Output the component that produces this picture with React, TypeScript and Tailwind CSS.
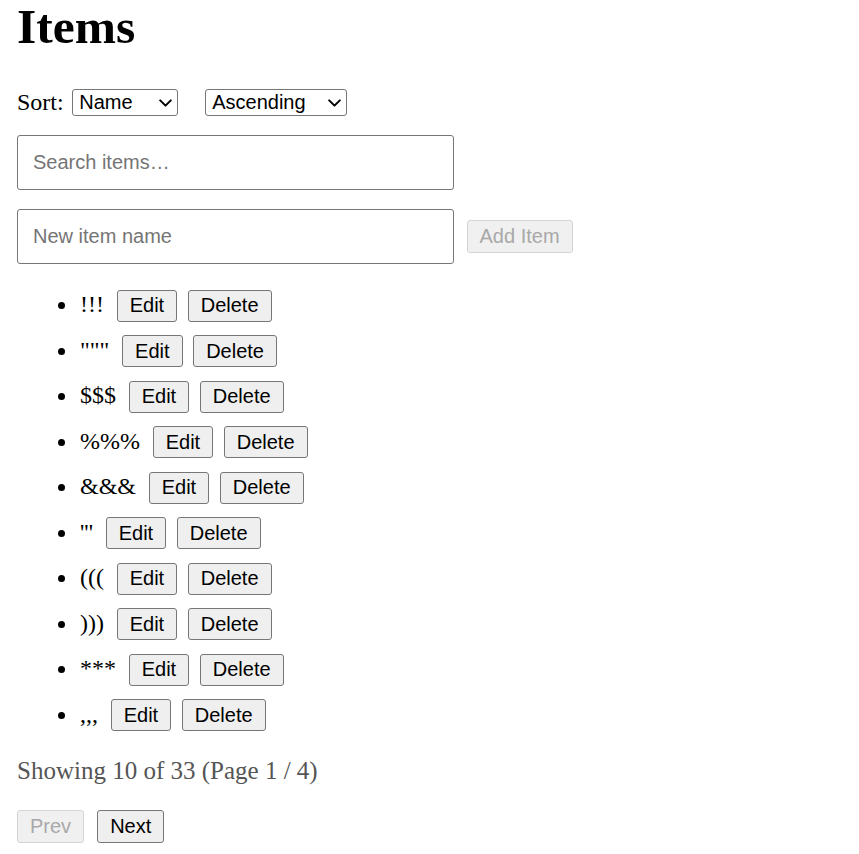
import React from "react";

const items = ["!!!", '"""', "$$$", "%%%", "&&&", "'''", "(((", ")))", "***", ",,,"];

function Chevron() {
  return (
    <svg width="13" height="8" viewBox="0 0 13 8" fill="none" className="shrink-0">
      <path d="M1.2 1.4 L6.5 6.6 L11.8 1.4" stroke="#000" strokeWidth="2" strokeLinecap="round" strokeLinejoin="round" />
    </svg>
  );
}

function FakeSelect({ label, widthClass }: { label: string; widthClass: string }) {
  return (
    <div
      className={`flex h-[27px] items-center justify-between rounded-[3px] border border-[#767676] bg-white pl-[6.5px] pr-[5px] font-['Liberation_Sans',Arial,sans-serif] text-[20px] text-black ${widthClass}`}
    >
      <span>{label}</span>
      <Chevron />
    </div>
  );
}

const btn =
  "rounded-[3px] border border-[#767676] bg-[#efefef] px-[12px] py-[3.5px] font-['Liberation_Sans',Arial,sans-serif] text-[20px] leading-[23px] text-black";
const btnDisabled =
  "rounded-[3px] border border-[#d4d4d4] bg-[#f0f0f0] px-[12px] font-['Liberation_Sans',Arial,sans-serif] text-[20px] leading-[23px] text-[#a8a8a8]";

export default function App() {
  return (
    <div className="min-h-screen bg-white pl-[17px] pt-[3px] font-['Liberation_Serif','Times_New_Roman',serif] text-[24px] leading-[normal] text-black">
      <h1 className="text-[49.5px] font-bold leading-[48px]">Items</h1>

      <div className="mt-[38px] flex h-[27px] items-center">
        <span>Sort:</span>
        <div className="ml-[8px]">
          <FakeSelect label="Name" widthClass="w-[106.5px]" />
        </div>
        <div className="ml-[26.5px]">
          <FakeSelect label="Ascending" widthClass="w-[142.5px]" />
        </div>
      </div>

      <div className="mt-[19px]">
        <input
          type="text"
          placeholder="Search items…"
          className="h-[55px] w-[437px] rounded-[3px] border border-[#767676] bg-white px-[15px] font-['Liberation_Sans',Arial,sans-serif] text-[20px] text-black outline-none placeholder:text-[#757575]"
        />
      </div>

      <div className="mt-[19px] flex items-center">
        <input
          type="text"
          placeholder="New item name"
          className="h-[55px] w-[437px] rounded-[3px] border border-[#767676] bg-white px-[15px] font-['Liberation_Sans',Arial,sans-serif] text-[20px] text-black outline-none placeholder:text-[#757575]"
        />
        <button disabled className={`ml-[12.5px] h-[33px] ${btnDisabled}`}>
          Add Item
        </button>
      </div>

      <ul className="mt-[18.75px]">
        {items.map((it) => (
          <li key={it} className="flex h-[45.5px] items-center">
            <span className="ml-[41px] mr-[15px] h-[7px] w-[7px] rounded-full bg-black" />
            <div className="flex items-baseline">
              <span>{it}</span>
              <button className={`ml-[12.7px] ${btn}`}>Edit</button>
              <button className={`ml-[10.6px] ${btn}`}>Delete</button>
            </div>
          </li>
        ))}
      </ul>

      <p className="mt-[19px] text-[25px] text-[#555555]">Showing 10 of 33 (Page 1 / 4)</p>

      <div className="mt-[25.5px] flex items-center pb-[10px]">
        <button disabled className={`h-[32.5px] ${btnDisabled}`}>
          Prev
        </button>
        <button className={`ml-[13px] h-[32.5px] ${btn} py-0`}>Next</button>
      </div>
    </div>
  );
}
